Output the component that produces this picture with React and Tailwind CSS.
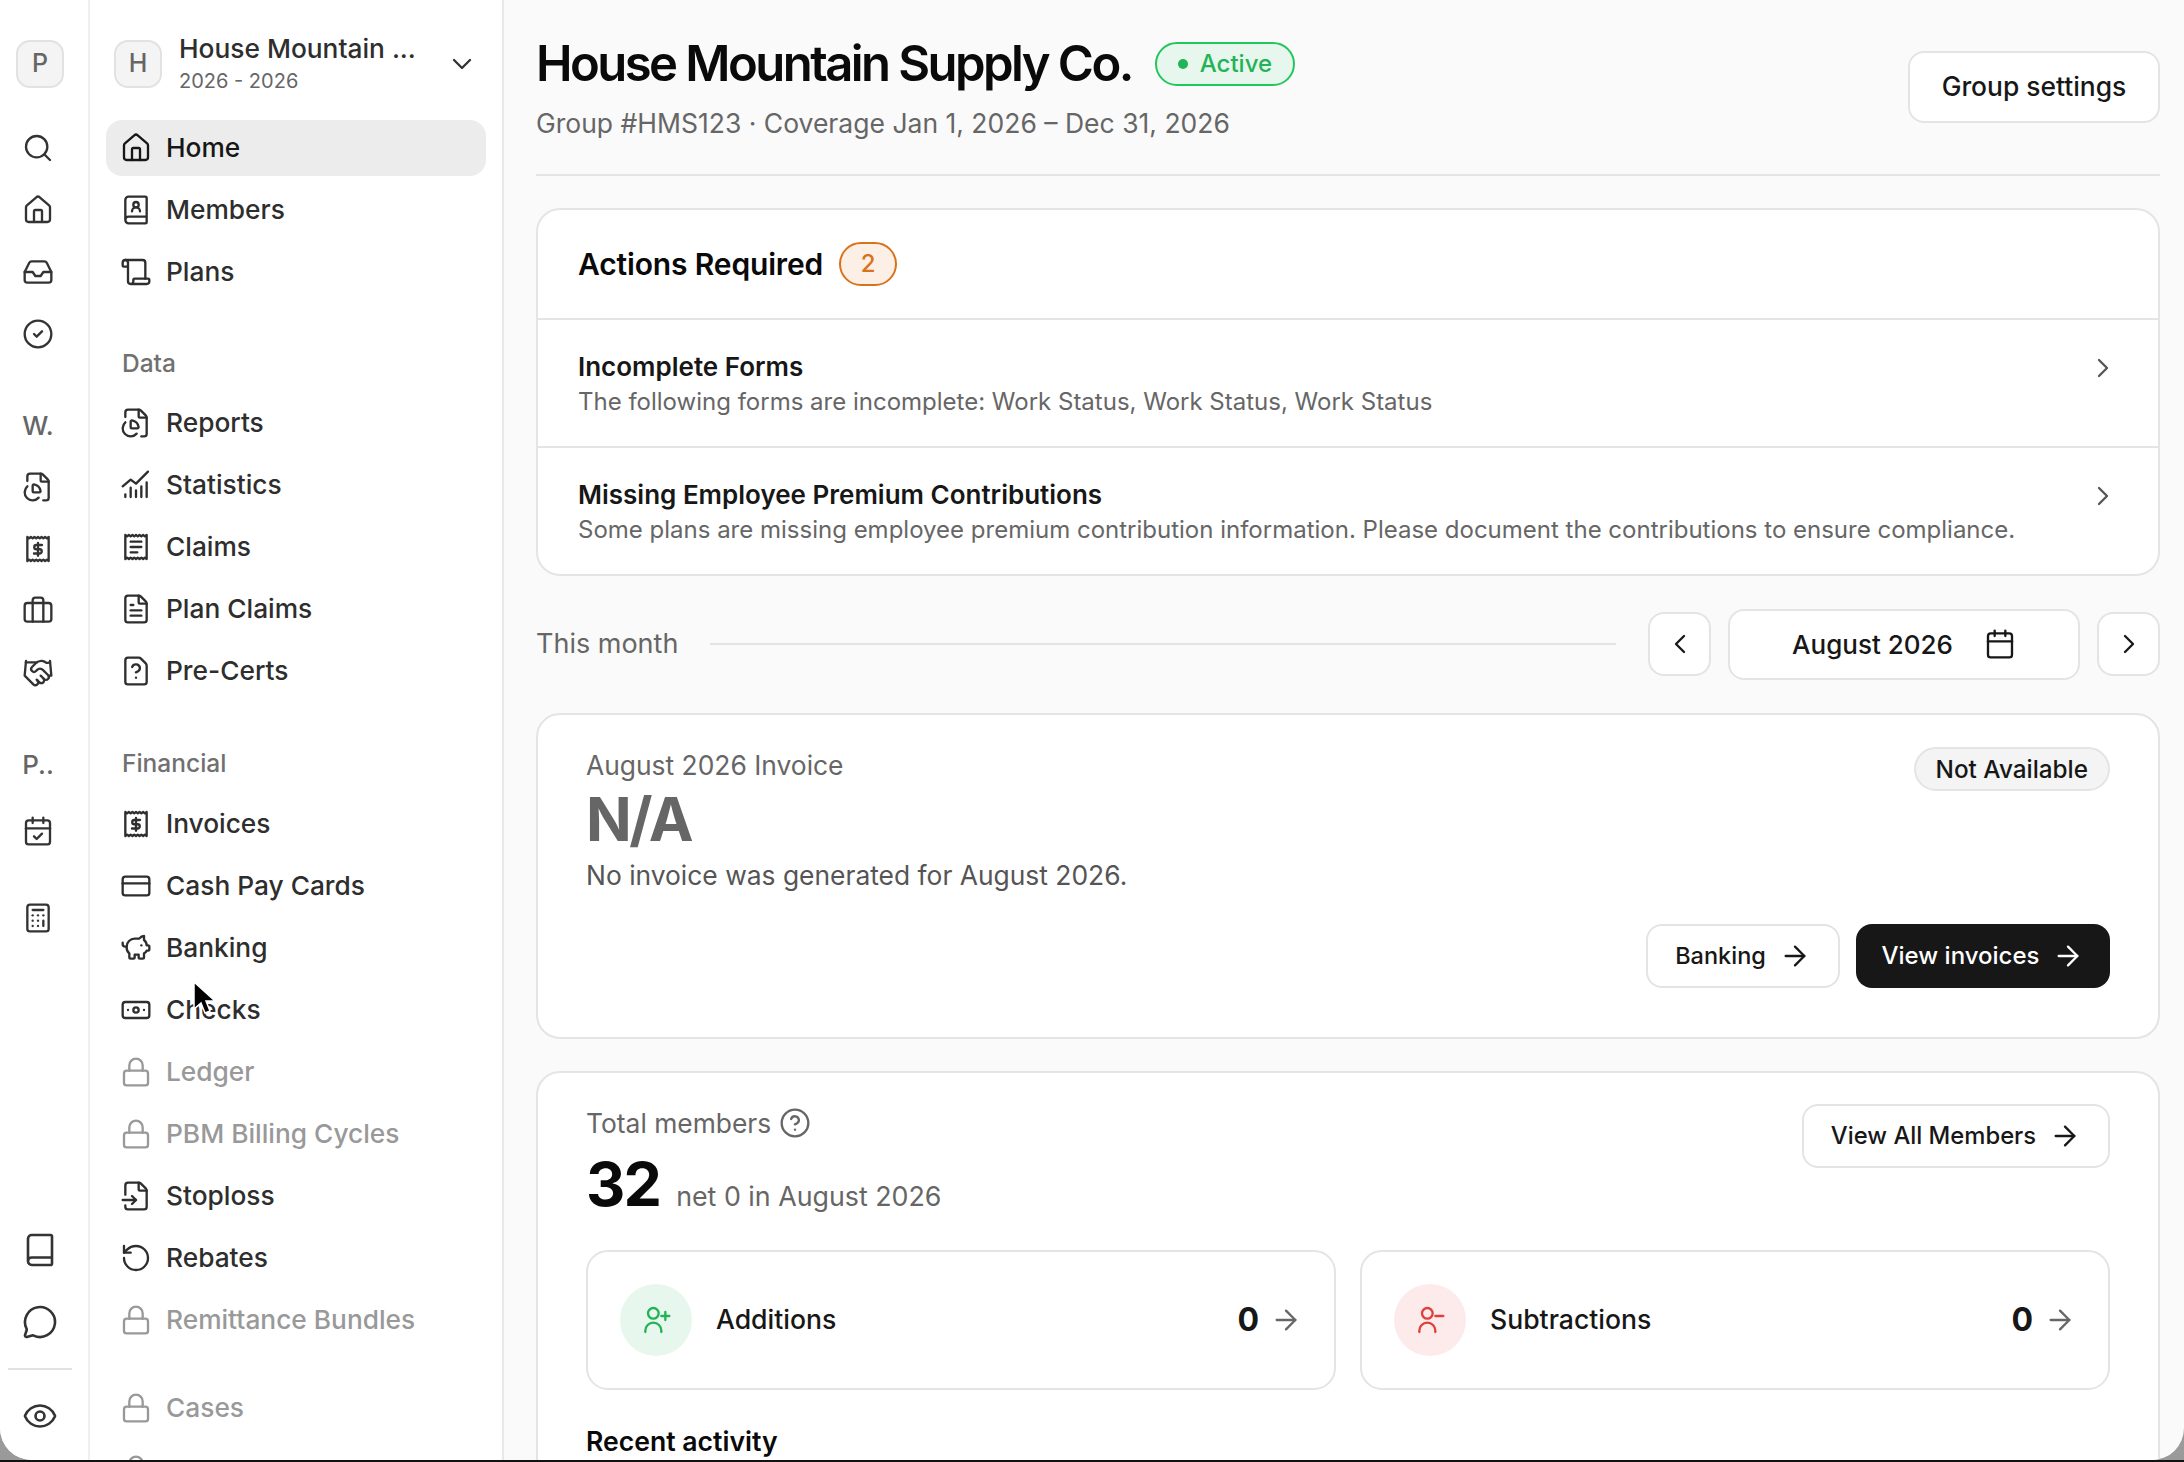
import React from 'react'
import {
  Search, House, Inbox, CircleCheck, BookUser, Scroll, FileChartPie, FileText, FileQuestionMark,
  CreditCard, PiggyBank, Banknote, Lock, FileInput, RotateCcw, Briefcase, Handshake, CalendarCheck,
  Calculator, Book, MessageCircle, Eye, ChevronDown, ChevronLeft, ChevronRight, Calendar, ArrowRight,
  CircleQuestionMark,
} from 'lucide-react'

const STROKE = 1.75

const ReceiptOutline = () => (
  <path d="M4 3l1.33 1 1.33-1L8 4l1.33-1 1.33 1L12 3l1.33 1 1.33-1L16 4l1.33-1 1.33 1L20 3v18l-1.33-1-1.33 1L16 20l-1.33 1-1.33-1L12 21l-1.33-1-1.33 1L8 20l-1.33 1-1.33-1L4 21z" />
)

function Glyph({ size = 32, children, className = '' }) {
  return (
    <svg width={size} height={size} viewBox="0 0 24 24" fill="none" stroke="currentColor" strokeWidth={STROKE} strokeLinecap="round" strokeLinejoin="round" className={className}>
      {children}
    </svg>
  )
}

const ReceiptDollar = (props) => (
  <Glyph {...props}>
    <ReceiptOutline />
    <path d="M15 9h-4.200a1.600 1.600 0 0 0 0 3.200h2.400a1.600 1.600 0 0 1 0 3.200H9M12 7.500v9.500" />
  </Glyph>
)

const ReceiptLines = (props) => (
  <Glyph {...props}>
    <ReceiptOutline />
    <path d="M8 8h8M8 12h8M8 16h5" />
  </Glyph>
)

const StatsIcon = (props) => (
  <Glyph {...props}>
    <path d="M2 13l6-5 4 3 9-9" />
    <path d="M4 21v-2M8 21v-7M12 21v-5M16 21v-8M20 21v-11" />
  </Glyph>
)

const PersonPlus = (props) => (
  <Glyph {...props}>
    <circle cx="10" cy="7" r="4" />
    <path d="M4 21v-1a6 6 0 0 1 12 0v1" />
    <path d="M19 6v6M16 9h6" />
  </Glyph>
)

const PersonMinus = (props) => (
  <Glyph {...props}>
    <circle cx="10" cy="7" r="4" />
    <path d="M4 21v-1a6 6 0 0 1 12 0v1" />
    <path d="M16 9h6" />
  </Glyph>
)

const topNav = [
  { label: 'Home', icon: House, active: true },
  { label: 'Members', icon: BookUser },
  { label: 'Plans', icon: Scroll },
]

const dataNav = [
  { label: 'Reports', icon: FileChartPie },
  { label: 'Statistics', icon: StatsIcon },
  { label: 'Claims', icon: ReceiptLines },
  { label: 'Plan Claims', icon: FileText },
  { label: 'Pre-Certs', icon: FileQuestionMark },
]

const financialNav = [
  { label: 'Invoices', icon: ReceiptDollar },
  { label: 'Cash Pay Cards', icon: CreditCard },
  { label: 'Banking', icon: PiggyBank },
  { label: 'Checks', icon: Banknote },
  { label: 'Ledger', icon: Lock, locked: true },
  { label: 'PBM Billing Cycles', icon: Lock, locked: true },
  { label: 'Stoploss', icon: FileInput },
  { label: 'Rebates', icon: RotateCcw },
  { label: 'Remittance Bundles', icon: Lock, locked: true },
]

function NavItem({ item }) {
  const Icon = item.icon
  let color = 'text-[#2e2e2e]'
  if (item.locked) color = 'text-[#999999]'
  if (item.active) color = 'bg-[#ececec] text-[#171717]'
  return (
    <div className={`flex h-[56px] mb-[6px] items-center gap-[14px] rounded-[16px] pl-[14px] text-[26.3px] font-medium ${color}`}>
      <Icon size={32} strokeWidth={STROKE} className="shrink-0" />
      <span>{item.label}</span>
    </div>
  )
}

function RailIcon({ icon: Icon, size = 32, className = 'h-[62px]' }) {
  return (
    <div className={`flex items-center justify-center text-[#333333] ${className}`}>
      <Icon size={size} strokeWidth={STROKE} />
    </div>
  )
}

function Avatar({ letter }) {
  return (
    <div className="flex h-[48px] w-[48px] shrink-0 items-center justify-center rounded-[14px] border-2 border-[#e2e2e2] bg-[#f4f4f4] text-[25px] font-medium text-[#666666]">
      {letter}
    </div>
  )
}

function OutlineButton({ children, className = '' }) {
  return (
    <div className={`flex items-center justify-center rounded-[16px] border-2 border-[#e4e4e4] bg-white font-medium text-[#171717] ${className}`}>
      {children}
    </div>
  )
}

function ActionRow({ title, text, last }) {
  return (
    <div className={`flex items-start justify-between pl-[40px] pr-[39px] pt-[29px] ${last ? 'h-[126px]' : 'h-[128px] border-b-2 border-[#e4e4e4]'}`}>
      <div>
        <div className="text-[26px] leading-[36px] font-semibold text-[#171717]">{title}</div>
        <div className="text-[24px] leading-[34px] text-[#666666]">{text}</div>
      </div>
      <ChevronRight size={32} className="mt-[3px] text-[#555555]" strokeWidth={STROKE} />
    </div>
  )
}

function ChangeCard({ icon: Icon, label, circle, color }) {
  return (
    <div className="flex h-[140px] flex-1 items-center rounded-[22px] border-2 border-[#e4e4e4] px-[32px]">
      <div className={`flex h-[72px] w-[72px] items-center justify-center rounded-full ${circle} ${color}`}>
        <Icon size={32} />
      </div>
      <span className="ml-[24px] text-[26.6px] font-medium text-[#171717]">{label}</span>
      <span className="ml-auto text-[32px] font-bold text-[#171717]">0</span>
      <ArrowRight size={32} strokeWidth={STROKE} className="ml-[11px] text-[#666666]" />
    </div>
  )
}

export default function App() {
  return (
    <div className="h-[1462px] w-[2184px] overflow-hidden bg-[#9a9a9a] font-['Inter',sans-serif]">
      <div className="relative flex h-[1460px] overflow-hidden rounded-b-[32px] bg-[#fafafa]">
        {/* icon rail */}
        <aside className="flex w-[90px] shrink-0 flex-col border-r-2 border-[#f0f0f0] bg-white">
          <div className="ml-[16px] mt-[40px] mb-[29px]"><Avatar letter="P" /></div>
          <div className="w-[76px]">
            <RailIcon icon={Search} />
            <RailIcon icon={House} />
            <RailIcon icon={Inbox} />
            <RailIcon icon={CircleCheck} />
            <div className="mt-[29px] flex h-[62px] items-center justify-center text-[26px] font-medium text-[#666666]">W.</div>
            <RailIcon icon={FileChartPie} />
            <RailIcon icon={ReceiptDollar} />
            <RailIcon icon={Briefcase} />
            <RailIcon icon={Handshake} />
            <div className="mt-[29px] flex h-[62px] items-center justify-center text-[26px] font-medium text-[#666666]">P..</div>
            <RailIcon icon={CalendarCheck} className="h-[72px]" />
            <RailIcon icon={Calculator} className="h-[102px]" />
          </div>
          <div className="mt-auto mb-[8px] flex w-[80px] flex-col items-center">
            <RailIcon icon={Book} size={36} className="h-[72px]" />
            <RailIcon icon={MessageCircle} size={36} className="h-[72px]" />
            <div className="my-[10px] h-[2px] w-[64px] bg-[#e2e2e2]" />
            <RailIcon icon={Eye} size={36} className="h-[72px]" />
          </div>
        </aside>

        {/* group sidebar */}
        <aside className="w-[414px] shrink-0 border-r-2 border-[#e8e8e8] bg-white px-[16px]">
          <div className="mt-[40px] mb-[32px] flex h-[48px] items-center pl-[8px]">
            <Avatar letter="H" />
            <div className="ml-[17px] flex-1">
              <div className="text-[26.3px] leading-[30px] font-medium text-[#2e2e2e]">House Mountain ...</div>
              <div className="mt-[4px] text-[20px] leading-[26px] text-[#666666]">2026 - 2026</div>
            </div>
            <ChevronDown size={32} strokeWidth={STROKE} className="mr-[8px] text-[#333333]" />
          </div>
          {topNav.map((item) => <NavItem key={item.label} item={item} />)}
          <div className="mt-[48px] mb-[17px] h-[30px] pl-[16px] text-[24.5px] leading-[30px] font-medium text-[#707070]">Data</div>
          {dataNav.map((item) => <NavItem key={item.label} item={item} />)}
          <div className="mt-[49px] mb-[18px] h-[30px] pl-[16px] text-[24.5px] leading-[30px] font-medium text-[#707070]">Financial</div>
          {financialNav.map((item) => <NavItem key={item.label} item={item} />)}
          <div className="mt-[32px]">
            <NavItem item={{ label: 'Cases', icon: Lock, locked: true }} />
            <NavItem item={{ label: '', icon: Lock, locked: true }} />
          </div>
        </aside>

        {/* main */}
        <main className="min-w-0 flex-1 pl-[32px] pr-[24px]">
          <header className="flex h-[176px] items-start justify-between border-b-2 border-[#e4e4e4]">
            <div>
              <div className="mt-[35px] flex items-center">
                <h1 className="text-[49px] leading-[58px] font-semibold tracking-[-0.052em] text-[#0a0a0a]">House Mountain Supply Co.</h1>
                <span className="ml-[23px] flex h-[44px] items-center gap-[12px] rounded-full border-2 border-[#22c55e] bg-[#e8f7ed] px-[21px] text-[24px] font-medium text-[#22b357]">
                  <span className="h-[10px] w-[10px] rounded-full bg-[#22b357]" />
                  Active
                </span>
              </div>
              <p className="mt-[12px] text-[26.5px] leading-[36px] text-[#666666]">Group #HMS123 · Coverage Jan 1, 2026 – Dec 31, 2026</p>
            </div>
            <OutlineButton className="mt-[51px] h-[72px] w-[252px] text-[26.4px]">Group settings</OutlineButton>
          </header>

          <section className="mt-[32px] rounded-[24px] border-2 border-[#e4e4e4] bg-white">
            <div className="flex h-[110px] items-center gap-[16px] border-b-2 border-[#e4e4e4] pl-[40px]">
              <h2 className="text-[30px] font-semibold tracking-[-0.005em] text-[#0a0a0a]">Actions Required</h2>
              <span className="flex h-[44px] w-[58px] items-center justify-center rounded-full border-2 border-[#d9731a] bg-[#fbefe6] text-[24px] font-medium text-[#d9731a]">2</span>
            </div>
            <ActionRow title="Incomplete Forms" text="The following forms are incomplete: Work Status, Work Status, Work Status" />
            <ActionRow last title="Missing Employee Premium Contributions" text="Some plans are missing employee premium contribution information. Please document the contributions to ensure compliance." />
          </section>

          <div className="mt-[33px] flex h-[70px] items-center">
            <span className="text-[27px] text-[#666666]">This month</span>
            <div className="ml-[32px] h-[2px] flex-1 bg-[#e4e4e4]" />
            <OutlineButton className="ml-[32px] h-[64px] w-[63px]"><ChevronLeft size={32} strokeWidth={STROKE} /></OutlineButton>
            <OutlineButton className="ml-[17px] h-[71px] w-[352px] gap-[31px] text-[26px]">
              August 2026
              <Calendar size={32} strokeWidth={STROKE} />
            </OutlineButton>
            <OutlineButton className="ml-[17px] h-[64px] w-[63px]"><ChevronRight size={32} strokeWidth={STROKE} /></OutlineButton>
          </div>

          <section className="mt-[34px] h-[326px] rounded-[24px] border-2 border-[#e4e4e4] bg-white px-[48px] pt-[32px]">
            <div className="flex items-start justify-between">
              <div>
                <div className="text-[26.4px] leading-[36px] text-[#666666]">August 2026 Invoice</div>
                <div className="text-[60px] leading-[72px] font-bold tracking-[-0.04em] text-[#666666]">N/A</div>
                <div className="text-[26.4px] leading-[40px] text-[#555555]">No invoice was generated for August 2026.</div>
              </div>
              <span className="flex h-[44px] items-center rounded-full border-2 border-[#e4e4e4] bg-[#f4f4f4] px-[20px] text-[24.3px] font-medium text-[#171717]">Not Available</span>
            </div>
            <div className="mt-[29px] flex justify-end gap-[16px]">
              <OutlineButton className="h-[64px] w-[194px] gap-[13px] text-[23.5px]">
                Banking <ArrowRight size={32} strokeWidth={STROKE} />
              </OutlineButton>
              <div className="flex h-[64px] w-[254px] items-center justify-center gap-[13px] rounded-[16px] bg-[#171717] text-[24px] font-medium text-white">
                View invoices <ArrowRight size={32} strokeWidth={STROKE} />
              </div>
            </div>
          </section>

          <section className="mt-[32px] rounded-[24px] border-2 border-[#e4e4e4] bg-white px-[48px] pt-[31px] pb-[40px]">
            <div className="flex items-start justify-between">
              <div>
                <div className="flex items-center gap-[8px] text-[26.4px] leading-[38px] text-[#666666]">
                  Total members <CircleQuestionMark size={32} strokeWidth={STROKE} />
                </div>
                <div className="mt-[7px] flex items-baseline gap-[16px]">
                  <span className="text-[61px] leading-[70px] font-bold tracking-[-0.03em] text-[#0a0a0a]">32</span>
                  <span className="text-[26.8px] text-[#666666]">net 0 in August 2026</span>
                </div>
              </div>
              <OutlineButton className="h-[64px] w-[308px] gap-[13px] text-[23.8px]">
                View All Members <ArrowRight size={32} strokeWidth={STROKE} />
              </OutlineButton>
            </div>
            <div className="mt-[31px] flex gap-[24px]">
              <ChangeCard icon={PersonPlus} label="Additions" circle="bg-[#e8f7ed]" color="text-[#22b357]" />
              <ChangeCard icon={PersonMinus} label="Subtractions" circle="bg-[#fdeaea]" color="text-[#e0403a]" />
            </div>
            <h3 className="mt-[32px] text-[26.6px] font-semibold text-[#0a0a0a]">Recent activity</h3>
          </section>
        </main>

        {/* pointer */}
        <svg className="absolute left-[192px] top-[981px]" width="24" height="36" viewBox="0 0 24 36">
          <path d="M2 1v27l7-6 4 10 5-2-4-10h9z" fill="#000000" stroke="#ffffff" strokeWidth="1.500" />
        </svg>
      </div>
      <div className="h-[2px] bg-[#111111]" />
    </div>
  )
}
